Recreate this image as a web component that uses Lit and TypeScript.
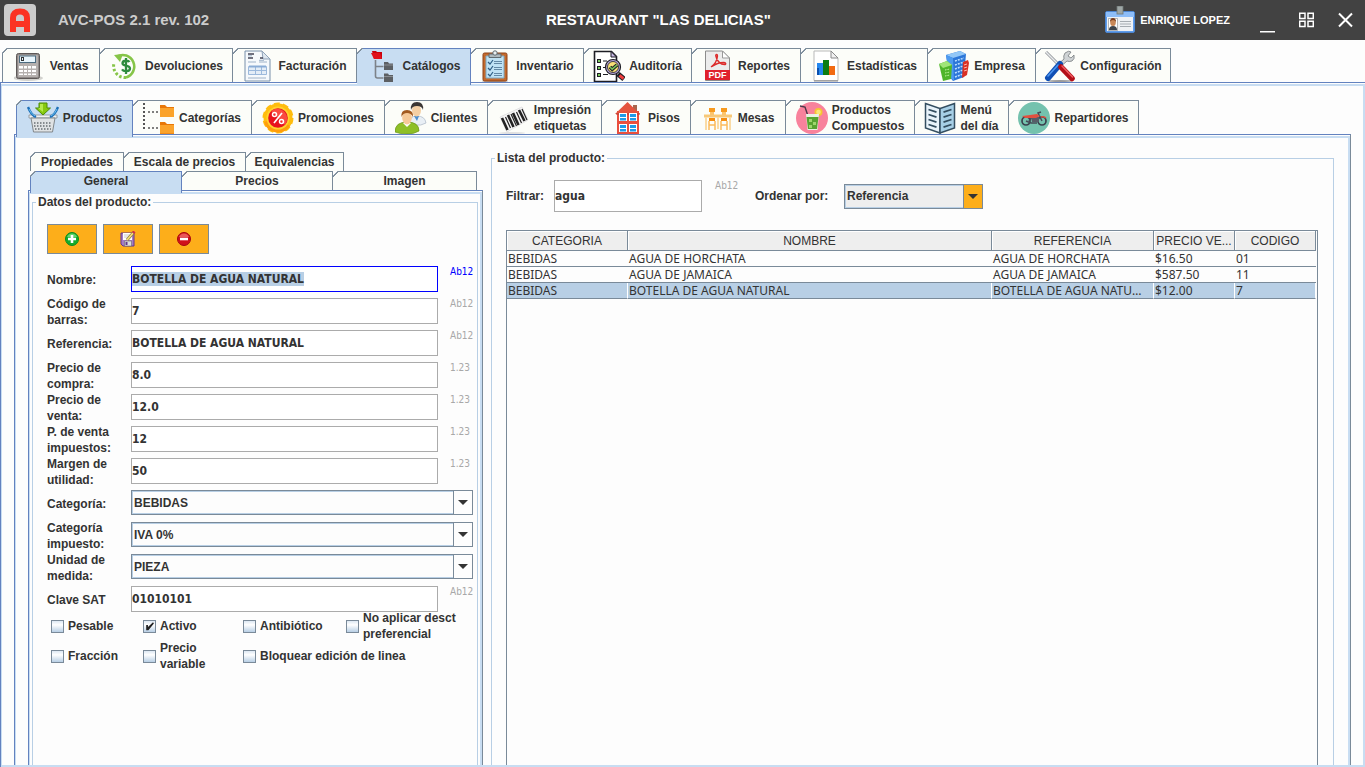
import { LitElement, html, css, TemplateResult } from "lit";
import { customElement, property, state } from "lit/decorators.js";
import { classMap } from "lit/directives/class-map.js";

type Tab = { id: string; label: string[]; };

const icon = (body: TemplateResult) => body;

const ICONS: Record<string, TemplateResult> = {
  ventas: icon(html`<svg viewBox="0 0 32 32" width="32" height="32" aria-hidden="true">
    <ellipse cx="14" cy="28" rx="15" ry="3" fill="#d2d2ce"/><rect x="2.500" y="3.500" width="23" height="25" rx="2" fill="#8f8a88" stroke="#5d5857"/>
    <rect x="4" y="5" width="20" height="22" rx="1" fill="#b5b0ae"/><rect x="5.500" y="6" width="16" height="6.500" fill="#e9f6fd" stroke="#4c6c80"/>
    <rect x="7.500" y="7.500" width="2" height="3" fill="none" stroke="#333"/>
    <g fill="#fff"><path d="M5 16h4v2.500H5zM10 16h3v2.500h-3zM14 16h3v2.500h-3zM18 16h4v2.500h-4zM5 20h4v2H5zM10 20h3v2h-3zM14 20h3v2h-3zM18 20h4v2h-4zM5 23.500h4V25H5zM10 23.500h3V25h-3zM14 23.500h3V25h-3zM18 23.500h4V25h-4z"/></g></svg>`),
  devoluciones: icon(html`<svg viewBox="0 0 32 32" width="32" height="32" aria-hidden="true">
    <path d="M8 6.500A11.500 11.500 0 1 1 17 27.500" fill="none" stroke="#86c548" stroke-width="2.600"/><path d="M5 5l9-1-3 8z" fill="#86c548"/>
    <path d="M17 27.500A11.500 11.500 0 0 1 5 13" fill="none" stroke="#86c548" stroke-width="3" stroke-dasharray="2.500 2"/>
    <path d="M20.500 12c-1-1.700-7-2-7 1.200 0 3.300 7.500 1.700 7.500 5.300 0 3.300-6.500 3.300-8 .8M17 8v16" fill="none" stroke="#2e8b3e" stroke-width="2.300"/></svg>`),
  facturacion: icon(html`<svg viewBox="0 0 32 32" width="32" height="32" aria-hidden="true">
    <path d="M3 1h17l8 8v22H3z" fill="#f6f9fc" stroke="#7890aa"/><path d="M20 1l1 8h7z" fill="#dfe7ef" stroke="#8fa3b8"/>
    <path d="M6 4h6M6 8h5M18 8h3" stroke="#445" stroke-width="1.500"/><path d="M6 5.800h4M6 12h8M17 12h8M17 10.300h5M6 28h18" stroke="#9fb2c8"/>
    <path d="M6.500 16.500h18v8h-18zM6.500 20.500h18M13.500 16.500v8M19.500 16.500v8" fill="#e4edf7" stroke="#9cb9dc"/><path d="M7 16.500h17" stroke="#8aacd6" stroke-width="2"/></svg>`),
  catalogos: icon(html`<svg viewBox="0 0 32 32" width="32" height="32" aria-hidden="true">
    <path d="M9.500 10v16q0 2 2 2h6M9.500 16.500h8" fill="none" stroke="#7d8289" stroke-width="1.600"/>
    <path d="M6 1h4l1 1h5v7H8z" fill="#c9000b"/><path d="M5 3h9l2 6H8z" fill="#e0101b"/>
    <path d="M18 12h4l1 1.500h4V20h-9zM18 23.500h4l1 1.500h4v7h-9z" fill="#5c5f63"/><path d="M18 15h9M18 26.500h9" stroke="#8a8d92"/></svg>`),
  inventario: icon(html`<svg viewBox="0 0 32 32" width="32" height="32" aria-hidden="true">
    <ellipse cx="15" cy="31" rx="13" ry="1" fill="#aaa"/><rect x="3" y="3" width="24" height="28" rx="1.500" fill="#c56a2c" stroke="#8c4319"/>
    <path d="M6 6h18v22H6z" fill="#bfe2f4" stroke="#7fa9c0"/><path d="M9 4h12v3.500H9z" fill="#aeb9be" stroke="#5e6b72"/><circle cx="15" cy="3" r="2.200" fill="#e8eef0" stroke="#5e6b72"/>
    <path d="M8 12l2 2 3-4M8 18l2 2 3-4M8 24l2 2 3-4" fill="none" stroke="#2e5d84" stroke-width="1.200"/><path d="M14 11.500h8M14 13.500h8M14 17.500h8M14 19.500h8M14 23.500h8M14 25.500h8" stroke="#6389a5"/></svg>`),
  auditoria: icon(html`<svg viewBox="0 0 32 32" width="32" height="32" aria-hidden="true">
    <path d="M1.500 1.500h17l5 5v25h-22z" fill="#fff" stroke="#1d1d24" stroke-width="1.600"/><path d="M18 1.500v5.500h5.500z" fill="#c9b9e6" stroke="#1d1d24"/>
    <g fill="#7ecb5f" stroke="#1d1d24"><rect x="4.500" y="9.500" width="3" height="3"/><rect x="4.500" y="16.500" width="3" height="3"/><rect x="4.500" y="23.500" width="3" height="3"/></g>
    <path d="M10 11h4M10 17.500h2M10 24.500h5" stroke="#1d1d24"/><path d="M25 24l6 5" stroke="#1d1d24" stroke-width="5"/><path d="M26.500 25.300l4 3.300" stroke="#ef3c3c" stroke-width="3"/>
    <circle cx="20" cy="17" r="7.500" fill="#b9a6dd" stroke="#1d1d24" stroke-width="1.200"/><circle cx="20" cy="17" r="5.500" fill="#f9df77" stroke="#1d1d24" stroke-width=".8"/>
    <path d="M17 17l2.200 2.200L24 15" fill="none" stroke="#1d1d24" stroke-width="3.600"/><path d="M17 17l2.200 2.200L24 15" fill="none" stroke="#79c65a" stroke-width="1.600"/></svg>`),
  reportes: icon(html`<svg viewBox="0 0 32 32" width="32" height="32" aria-hidden="true">
    <path d="M3.500 1h17l7 7v22.500h-24z" fill="#ececec" stroke="#8c8c8c"/><path d="M20.500 1v7h7z" fill="#fff" stroke="#999"/>
    <path d="M3 20h25v10H3z" fill="#e0202c"/><text x="15.500" y="28" text-anchor="middle" class="pdf">PDF</text>
    <path d="M9 17c3-2 6-6 6.500-11 0-2-2-2-1.700 0 .7 5 5 8.500 8.700 8.500 2 0 1.500-2-1-2-3.500 0-8 1.500-11.500 4" fill="none" stroke="#dc2b2b" stroke-width="1.400"/></svg>`),
  estadisticas: icon(html`<svg viewBox="0 0 32 32" width="32" height="32" aria-hidden="true">
    <path d="M3 1h17l7 7v22.500H3z" fill="#fff" stroke="#b9b9b9"/><path d="M3 31h24" stroke="#8b8b8b"/><path d="M20 1v7h7z" fill="#f1f1f1" stroke="#8a8a8a"/>
    <path d="M6 13h6v12H6z" fill="#2487ef"/><path d="M6 18h2v7H6z" fill="#0b4fae"/><path d="M12 10h6v15h-6z" fill="#0b7d14"/><path d="M18 16h6v9h-6z" fill="#f26a12"/></svg>`),
  empresa: icon(html`<svg viewBox="0 0 32 32" width="32" height="32" aria-hidden="true">
    <path d="M8 5l14-4 6 3-2 23-11 4-4-5z" fill="#2c76d8"/><path d="M8 5l14-4 6 3-13 4z" fill="#92c7f7"/><path d="M8 5l7 3 1 23-4-4z" fill="#4c9af0"/>
    <path d="M17 11l9-3M17 15l9-3M17 19l8-3M17 23l8-3M17 27l8-3" stroke="#b8dcff" stroke-width="1.500" stroke-dasharray="2 1"/>
    <path d="M1 14l8-3 5 4-1 14-8 2z" fill="#4fb52b"/><path d="M1 14l8-3 5 4-9 3z" fill="#a0e578"/><path d="M7 20l5-1M7 23l5-1M7 26l5-1" stroke="#c2f5a4" stroke-dasharray="1.500 1"/>
    <path d="M25 12l5-2 1 3-2 12-5 3z" fill="#d93025"/><path d="M26 15l3-1M26 18l3-1M26 21l3-1" stroke="#ffb4a8"/></svg>`),
  configuracion: icon(html`<svg viewBox="0 0 32 32" width="32" height="32" aria-hidden="true">
    <ellipse cx="16" cy="31" rx="12" ry="1" fill="#9b9b9b"/><path d="M2 2l12 12" stroke="#8d9194" stroke-width="3"/><path d="M2 2l12 12" stroke="#e8ebed" stroke-width="1.500"/>
    <path d="M21 3q4-3 6-1l-3 4 3 2 3-3q1 4-2 6-3 1-5 0l-8 7-2-3 7-6q-1-3 1-6z" fill="#cfd3d5" stroke="#767b7e" stroke-width=".8"/>
    <path d="M16 14l-12 14" stroke="#0f4fb4" stroke-width="6" stroke-linecap="round"/><path d="M14 15L4 26" stroke="#4c95ef" stroke-width="1.600" stroke-linecap="round"/>
    <path d="M17 17l11 11.500" stroke="#b30f18" stroke-width="5.500" stroke-linecap="round"/><path d="M18 16l10.500 11" stroke="#f05a5f" stroke-width="1.500" stroke-linecap="round"/></svg>`),
  productos: icon(html`<svg viewBox="0 0 32 32" width="32" height="32" aria-hidden="true">
    <path d="M2 13h28v3H2z" fill="#f1f3f4" stroke="#888e92" stroke-width=".8"/><path d="M4 16h24l-2.500 14H6.500z" fill="#dfe2e4" stroke="#81878b"/>
    <path d="M7 21h18M7 24h18M8 27h16" stroke="#676d71" stroke-width="1.600" stroke-dasharray="1.500 1.500"/>
    <path d="M1 5q3 8 8 10M31 5q-3 8-8 10" fill="none" stroke="#1d6fb8" stroke-width="2.400"/><path d="M2 7q2 5 6 7M30 7q-2 5-6 7" fill="none" stroke="#6cc0f0"/>
    <path d="M12 1h8v5h3.500L16 13 8.500 6H12z" fill="#86c90f" stroke="#4f8c07"/><path d="M13 2h3v8l-5-4h2z" fill="#b5e94c"/></svg>`),
  categorias: icon(html`<svg viewBox="0 0 32 32" width="32" height="32" aria-hidden="true">
    <path d="M1 1v27" stroke="#555" stroke-width="2" stroke-dasharray="2 2"/><path d="M5 10h11M5 26h11" stroke="#555" stroke-width="1.600" stroke-dasharray="2 2"/>
    <path d="M17 3h5l2 2h7v10H17zM17 20h5l2 2h7v10H17z" fill="#e87708"/><path d="M17 6h14v9H17zM17 23h14v8.500H17z" fill="#fba32b"/></svg>`),
  promociones: icon(html`<svg viewBox="0 0 32 32" width="32" height="32" aria-hidden="true">
    <circle cx="16" cy="16" r="14.500" fill="#ffbd0e" stroke="#ffbd0e" stroke-width="2" stroke-dasharray="6 3.100"/>
    <path d="M2 20a14.500 14.500 0 0 0 26 4L16 16z" fill="#ff9d0b"/><circle cx="16" cy="16" r="11.500" fill="#ffd22f"/><circle cx="16" cy="16" r="9.800" fill="#e8131e"/><path d="M9.100 9.100A9.800 9.800 0 0 1 22.900 22.900z" fill="#fb4a41"/>
    <path d="M20 11l-8 10" stroke="#fff" stroke-width="1.700"/><circle cx="12.500" cy="12.500" r="2" fill="none" stroke="#fff" stroke-width="1.500"/><circle cx="19.500" cy="19.500" r="2" fill="none" stroke="#fff" stroke-width="1.500"/></svg>`),
  clientes: icon(html`<svg viewBox="0 0 32 32" width="32" height="32" aria-hidden="true">
    <path d="M14 22q0-8 8-8t9 7q-5 3-11 2z" fill="#e9eff5" stroke="#aab6c4" stroke-width=".7"/><path d="M19 14l3 5 2-5z" fill="#4d8fd0"/><ellipse cx="21.500" cy="8.500" rx="4.500" ry="6" fill="#f4cfa4"/><path d="M16 8q-1-8 6-8t6 8q-1-4-6-4t-6 4z" fill="#3b3634"/>
    <path d="M0 30q0-10 12-10t12 9q-5 3-12 3T0 30z" fill="#8ebf27" stroke="#69951a" stroke-width=".7"/><path d="M8 21l4 4 4-4z" fill="#fff"/><ellipse cx="12" cy="16" rx="4.800" ry="6.500" fill="#f6c998"/><path d="M6.500 15q-1-7 5.500-7t6 7q-2-4-6-4t-5.500 4z" fill="#a25a20"/></svg>`),
  etiquetas: icon(html`<svg viewBox="0 0 32 32" width="32" height="32" aria-hidden="true">
    <ellipse cx="14" cy="31" rx="13" ry="1" fill="#e0e0e0"/><path d="M2 15L24 5l6 13L9 30z" fill="#f5f5f5" stroke="#e2e2e2"/>
    <path d="M4 16l5.500 12M10 13l5.500 12M15 11l5.500 12M21 8l5.500 11" stroke="#222" stroke-width="2.600"/><path d="M7.500 15l5 11M13 12l5.500 12M18.500 10l5 11M24 7l5 11" stroke="#222" stroke-width="1.200"/></svg>`),
  pisos: icon(html`<svg viewBox="0 0 32 32" width="32" height="32" aria-hidden="true">
    <path d="M21 3h4v6h-4z" fill="#a9664d"/><path d="M5 9h22v23H5z" fill="#e94f3d"/><path d="M3 12L15.500 0 28 12z" fill="#e4543e"/><path d="M4 12h24" stroke="#b53b2e"/>
    <g fill="#fff"><path d="M7 11h8v8H7zM17 11h8v8h-8zM7 22h8v8H7zM17 22h8v8h-8z"/></g><g fill="#1e9be8"><path d="M8 12h6v3H8zM8 16h6v2.500H8zM18 12h6v3h-6zM18 16h6v2.500h-6zM8 23h6v3H8zM8 27h6v2.500H8zM18 23h6v3h-6zM18 27h6v2.500h-6z"/></g></svg>`),
  mesas: icon(html`<svg viewBox="0 0 32 32" width="32" height="32" aria-hidden="true">
    <path d="M2 14h28" stroke="#f7c879" stroke-width="3"/><path d="M4 15v13M28 15v13M16 15v12" stroke="#fadba5" stroke-width="2"/>
    <path d="M7 6h6v4H7zM19 6h6v4h-6z" fill="#f79a1f"/><path d="M8 10h4v3H8zM20 10h4v3h-4z" fill="#fcc56d"/>
    <path d="M7 16h6v3H7zM19 16h6v3h-6z" fill="#f58d10"/><path d="M7 19v9M13 19v9M19 19v9M25 19v9M7 23h6M19 23h6" stroke="#fbbb5c" stroke-width="1.500"/></svg>`),
  compuestos: icon(html`<svg viewBox="0 0 32 32" width="32" height="32" aria-hidden="true">
    <circle cx="16" cy="16" r="16" fill="#f8829c"/><path d="M4 4l5 1 3 9" fill="none" stroke="#4d3648" stroke-width="1.400"/><circle cx="22.500" cy="10" r="4" fill="#f5c632"/><circle cx="22.500" cy="10" r="2.300" fill="#fae57c"/>
    <path d="M10 12h13l-1.500 16h-10z" fill="#e9f2e4"/><path d="M10.500 15h12L21 27H12z" fill="#58a331"/><path d="M13 17h3v3h-3zM17 20h3v3h-3zM13 23h3v3h-3z" fill="#9fd66d"/></svg>`),
  menu: icon(html`<svg viewBox="0 0 32 32" width="32" height="32" aria-hidden="true">
    <path d="M1.500 1.500L16 6.500V31L1.500 26z" fill="#e8f3fa" stroke="#344e60" stroke-width="1.500"/><path d="M30.500 1.500L16 6.500V31l14.500-5z" fill="#a6cfe6" stroke="#344e60" stroke-width="1.500"/>
    <path d="M4.500 7.500l8 2.600M4.500 12.500l8 2.600M4.500 17.500l8 2.600M4.500 22.500l8 2.600M27.500 7.500l-8 2.600M27.500 12.500l-8 2.600M27.500 17.500l-8 2.600M27.500 22.500l-8 2.600" stroke="#344e60" stroke-width="1.700"/></svg>`),
  repartidores: icon(html`<svg viewBox="0 0 32 32" width="32" height="32" aria-hidden="true">
    <circle cx="16" cy="16" r="16" fill="#74c2ae"/><circle cx="8" cy="19" r="4" fill="none" stroke="#3a3f4d" stroke-width="1.700"/><circle cx="24" cy="19" r="4" fill="none" stroke="#3a3f4d" stroke-width="1.700"/>
    <path d="M8 19l5 2h6M24 19l-4-8 3-1M11 19l3-4" fill="none" stroke="#454b58" stroke-width="1.500"/><path d="M13 15h8v5h-7z" fill="#565c68"/><path d="M4 14l8-1 7-1 3 2-4 2H7z" fill="#e1503f"/><path d="M23 15q3-1 5 1" fill="none" stroke="#e1503f" stroke-width="1.500"/></svg>`),
};

const MAIN_TABS: Tab[] = [
  { id: "ventas", label: ["Ventas"] },
  { id: "devoluciones", label: ["Devoluciones"] },
  { id: "facturacion", label: ["Facturación"] },
  { id: "catalogos", label: ["Catálogos"] },
  { id: "inventario", label: ["Inventario"] },
  { id: "auditoria", label: ["Auditoría"] },
  { id: "reportes", label: ["Reportes"] },
  { id: "estadisticas", label: ["Estadísticas"] },
  { id: "empresa", label: ["Empresa"] },
  { id: "configuracion", label: ["Configuración"] },
];

const CATALOG_TABS: Tab[] = [
  { id: "productos", label: ["Productos"] },
  { id: "categorias", label: ["Categorías"] },
  { id: "promociones", label: ["Promociones"] },
  { id: "clientes", label: ["Clientes"] },
  { id: "etiquetas", label: ["Impresión", "etiquetas"] },
  { id: "pisos", label: ["Pisos"] },
  { id: "mesas", label: ["Mesas"] },
  { id: "compuestos", label: ["Productos", "Compuestos"] },
  { id: "menu", label: ["Menú", "del día"] },
  { id: "repartidores", label: ["Repartidores"] },
];

const DETAIL_BACK: Tab[] = [
  { id: "propiedades", label: ["Propiedades"] },
  { id: "escala", label: ["Escala de precios"] },
  { id: "equivalencias", label: ["Equivalencias"] },
];

const DETAIL_FRONT: Tab[] = [
  { id: "general", label: ["General"] },
  { id: "precios", label: ["Precios"] },
  { id: "imagen", label: ["Imagen"] },
];

const FIELDS = [
  { id: "nombre", label: "Nombre:", value: "BOTELLA DE AGUA NATURAL", hint: "Ab12" },
  { id: "codigo", label: "Código de barras:", value: "7", hint: "Ab12" },
  { id: "referencia", label: "Referencia:", value: "BOTELLA DE AGUA NATURAL", hint: "Ab12" },
  { id: "compra", label: "Precio de compra:", value: "8.0", hint: "1.23" },
  { id: "venta", label: "Precio de venta:", value: "12.0", hint: "1.23" },
  { id: "impuestos", label: "P. de venta impuestos:", value: "12", hint: "1.23" },
  { id: "margen", label: "Margen de utilidad:", value: "50", hint: "1.23" },
];

const SELECTS = [
  { id: "categoria", label: "Categoría:", value: "BEBIDAS" },
  { id: "impuesto", label: "Categoría impuesto:", value: "IVA 0%" },
  { id: "unidad", label: "Unidad de medida:", value: "PIEZA" },
];

const CHECKS = [
  { id: "pesable", label: ["Pesable"], on: false },
  { id: "activo", label: ["Activo"], on: true },
  { id: "antibiotico", label: ["Antibiótico"], on: false },
  { id: "desct", label: ["No aplicar desct", "preferencial"], on: false },
  { id: "fraccion", label: ["Fracción"], on: false },
  { id: "variable", label: ["Precio", "variable"], on: false },
  { id: "bloquear", label: ["Bloquear edición de linea"], on: false },
];

const ROWS = [
  ["BEBIDAS", "AGUA DE HORCHATA", "AGUA DE HORCHATA", "$16.50", "01"],
  ["BEBIDAS", "AGUA DE JAMAICA", "AGUA DE JAMAICA", "$587.50", "11"],
  ["BEBIDAS", "BOTELLA DE AGUA NATURAL", "BOTELLA DE AGUA NATURAL", "$12.00", "7"],
];

const lines = (parts: string[]) => parts.map((p) => html`<span class="line">${p}</span>`);

@customElement("pos-tabs")
class PosTabs extends LitElement {
  @property({ attribute: false }) tabs: Tab[] = [];
  @property() active = "";
  @property() kind = "main";

  static styles = css`
    :host { display: block; position: relative; z-index: 1; }
    .strip { display: grid; justify-content: start; grid-template-rows: 34px; }
    .main { grid-template-columns: 98px 133px 124px 114px 113px 108px 109px 127px 108px 135px; }
    .catalog { grid-template-columns: 117px 119px 133px 103px 114px 89px 95px 129px 94px 130px; }
    .back, .front { grid-template-rows: 19px; }
    .back { grid-template-columns: 94px 122px 98px; }
    .front { grid-template-columns: 152px 151px 144px; }
    button {
      position: relative; display: flex; align-items: center; justify-content: center; gap: 4px;
      min-width: 0; margin: 0; padding: 0; border: 0 solid #7a8a99; border-top-width: 1px; border-right-width: 1px;
      background: #fcfdf9; color: #333; font: bold 12px/16px "Liberation Sans", Arial, sans-serif; white-space: nowrap; text-align: left;
    }
    button:first-child { border-left-width: 1px; }
    button::before {
      content: ""; position: absolute; left: 0; top: -1px; width: 6px; height: 6px;
      background: linear-gradient(to bottom right, #fdfdfd 40%, #7a8a99 42%, #7a8a99 52%, transparent 54%);
    }
    button:first-child::before { left: -1px; }
    button.on { background: #c8ddf2; border-color: #6382bf; height: calc(100% + 3px); padding-bottom: 3px; box-sizing: border-box; }
    svg { flex: none; display: block; }
    .line { display: block; }
    .pdf { font: bold 9px "Liberation Sans", Arial, sans-serif; fill: #fff; }
  `;

  render() {
    return html`<div class="strip ${this.kind}" role="tablist">
      ${this.tabs.map((t) => html`<button role="tab" class=${classMap({ on: t.id === this.active })}
        aria-selected=${t.id === this.active ? "true" : "false"}>${ICONS[t.id] ?? ""}<span>${lines(t.label)}</span></button>`)}
    </div>`;
  }
}

@customElement("pos-combo")
class PosCombo extends LitElement {
  @property() label = "";
  @property() value = "";
  @property({ type: Boolean, reflect: true }) accent = false;

  static styles = css`
    :host { display: block; position: relative; height: 25px; }
    select {
      appearance: none; width: 100%; height: 100%; box-sizing: border-box; margin: 0; padding: 0 22px 0 2px;
      border: 1px solid #7a8a99; border-radius: 0; background: #fdfdfd; color: #333;
      box-shadow: inset 0 0 0 1px #b8cfe5; font: bold 12px/16px "Liberation Sans", Arial, sans-serif; outline: 0;
    }
    .arrow {
      position: absolute; right: 1px; top: 1px; bottom: 1px; width: 18px; border-left: 1px solid #7a8a99;
      background: #fdfdfd; display: flex; align-items: center; justify-content: center; pointer-events: none;
    }
    :host([accent]) select { background: #eee; }
    :host([accent]) .arrow { background: #fdae1a; }
  `;

  render() {
    return html`<select aria-label=${this.label}><option>${this.value}</option></select>
      <span class="arrow"><svg width="10" height="5" viewBox="0 0 10 5" aria-hidden="true"><path d="M0 0h10L5 5z" fill="#333"/></svg></span>`;
  }
}

@customElement("product-form")
class ProductForm extends LitElement {
  static styles = css`
    :host { display: flex; flex-direction: column; }
    .offset { display: block; margin-left: 2px; }
    .panel { flex: 1; display: flex; border: 1px solid #6382bf; border-right-color: #7a8a99; border-bottom: 0; padding-top: 1px; }
    .inner { flex: 1; border: solid #c8ddf2; border-width: 2px 2px 0 1px; padding: 0 2px; display: flex; }
    fieldset { flex: 1; min-width: 0; margin: 0; border: 1px solid #b8cfe5; border-bottom: 0; padding: 14px 4px 0 14px; }
    legend { margin-left: -11px; padding: 0 2px; line-height: 16px; }
    .tools { display: flex; gap: 6px; margin-bottom: 12px; }
    .tools button { width: 50px; height: 30px; padding: 0; border: 1px solid #7a8a99; background: #fdae1a; display: flex; align-items: center; justify-content: center; }
    .rows { display: grid; gap: 6px; }
    .row { display: grid; grid-template: 26px / 84px 1fr 35px; align-items: center; }
    .row label { padding: 2px 8px 0 0; }
    .row pos-combo { grid-column: 2 / 4; align-self: start; }
    input.text {
      width: 100%; height: 26px; box-sizing: border-box; border: 1px solid #ababab; border-radius: 0; margin: 0; padding: 0;
      background: #fff; color: #333; font: bold 12px "DejaVu Sans Condensed", "DejaVu Sans", sans-serif; outline: 0; caret-color: transparent;
    }
    input.text::selection { background: #b8cfe5; color: #333; }
    .hint { align-self: start; padding-left: 12px; font: 10px/12px "DejaVu Sans Condensed", "DejaVu Sans", sans-serif; color: #a8a8a8; }
    .current input.text { border-color: #00f; }
    .current .hint { color: #00f; }
    .checks { display: grid; grid-template-columns: 92px 100px 103px 1fr; grid-template-rows: 28px 32px; margin: 0 0 0 4px; }
    .check { display: flex; align-items: center; gap: 4px; white-space: nowrap; }
    .wide { grid-column: 3 / 5; }
    .line { display: block; }
    .check input {
      appearance: none; flex: none; width: 13px; height: 13px; margin: 0; border: 1px solid #7a8a99;
      background: linear-gradient(#dde8f3, #fff 35%, #b8cfe5);
    }
    .check input:checked::before {
      content: ""; display: block; width: 11px; height: 11px; background: #222;
      clip-path: polygon(20% 40%, 36% 40%, 36% 60%, 82% 15%, 90% 28%, 40% 88%, 20% 88%);
    }
  `;

  firstUpdated() {
    const first = this.renderRoot.querySelector<HTMLInputElement>("#nombre");
    first?.focus();
    first?.select();
  }

  private field(f: { id: string; label: string; value: string; hint: string }) {
    return html`<div class=${classMap({ row: true, current: f.id === "nombre" })}>
      <label for=${f.id}>${f.label}</label>
      <input class="text" id=${f.id} .value=${f.value}><span class="hint">${f.hint}</span>
    </div>`;
  }

  render() {
    return html`
      <pos-tabs class="offset" kind="back" .tabs=${DETAIL_BACK}></pos-tabs>
      <pos-tabs class="offset" kind="front" active="general" .tabs=${DETAIL_FRONT}></pos-tabs>
      <div class="panel"><div class="inner"><fieldset>
        <legend>Datos del producto:</legend>
        <div class="tools">
          <button aria-label="Agregar"><svg width="16" height="16" viewBox="0 0 16 16"><circle cx="8" cy="8" r="6.500" fill="#14ad2b" stroke="#0c8a1f"/><path d="M3 6a5.300 5.300 0 0 1 10 0z" fill="#62d36f"/><path d="M8 4v8M4 8h8" stroke="#fff" stroke-width="2.600"/></svg></button>
          <button aria-label="Guardar"><svg width="16" height="16" viewBox="0 0 16 16"><path d="M1 2h13v13H3l-2-2z" fill="#a57cc4" stroke="#62378a"/><path d="M3 2h9v7H3z" fill="#fff"/><path d="M4 4h6M4 6h5" stroke="#ccc"/><path d="M4.500 10h7v5h-7z" fill="#ddd" stroke="#6b6b6b" stroke-width=".6"/><path d="M5.500 11h2v3h-2z" fill="#62378a"/><path d="M7 9l6.500-7.500" stroke="#93823c" stroke-width="3"/><path d="M7 9l6-7" stroke="#f7e27c" stroke-width="1.600"/><path d="M13 2l1.500-1.500" stroke="#d03048" stroke-width="3"/></svg></button>
          <button aria-label="Eliminar"><svg width="16" height="16" viewBox="0 0 16 16"><circle cx="8" cy="8" r="6.500" fill="#d0111b" stroke="#a60710"/><path d="M3 6a5.300 5.300 0 0 1 10 0z" fill="#e9585a"/><path d="M4 8h8" stroke="#fff" stroke-width="2.600"/></svg></button>
        </div>
        <div class="rows">
          ${FIELDS.map((f) => this.field(f))}
          ${SELECTS.map((s) => html`<div class="row"><label>${s.label}</label><pos-combo label=${s.label} value=${s.value}></pos-combo></div>`)}
          ${this.field({ id: "sat", label: "Clave SAT", value: "01010101", hint: "Ab12" })}
        </div>
        <div class="checks">
          ${CHECKS.map((c) => html`<label class=${classMap({ check: true, wide: c.id === "bloquear" })}>
            <input type="checkbox" .checked=${c.on}><span>${lines(c.label)}</span></label>`)}
        </div>
      </fieldset></div></div>`;
  }
}

@customElement("product-list")
class ProductList extends LitElement {
  @state() selected = 2;

  static styles = css`
    :host { display: flex; }
    fieldset { flex: 1; min-width: 0; margin: 0; border: 1px solid #b8cfe5; border-bottom: 0; padding: 14px 15px 0 14px; display: flex; flex-direction: column; }
    legend { margin-left: -11px; padding: 0 2px; line-height: 16px; }
    .content { display: flex; flex-direction: column; flex: 1; }
    .filter { display: flex; align-items: center; height: 32px; margin-bottom: 18px; }
    .filter > label { width: 48px; }
    .filter input { width: 148px; height: 32px; box-sizing: border-box; border: 1px solid #ababab; margin: 0; padding: 0; background: #fff; color: #333; font: bold 12px "DejaVu Sans Condensed", "DejaVu Sans", sans-serif; outline: 0; }
    .hint { align-self: start; width: 40px; margin-left: 13px; font: 10px/12px "DejaVu Sans Condensed", "DejaVu Sans", sans-serif; color: #a8a8a8; }
    .order { width: 89px; }
    .filter pos-combo { width: 139px; }
    .scroll { flex: 1; border: 1px solid #7a8a99; border-bottom: 0; padding-right: 1px; }
    table { width: 100%; table-layout: fixed; border-collapse: separate; border-spacing: 0; color: #333; font: 12px/15px "Noto Sans", sans-serif; }
    .c1 { width: 121px; } .c3 { width: 162px; } .c4, .c5 { width: 81px; }
    th, td { overflow: hidden; white-space: nowrap; text-overflow: ellipsis; box-sizing: border-box; }
    th { height: 20px; padding: 1px 1px 0; background: #eee; border-right: 1px solid #7a8a99; border-bottom: 1px solid #7a8a99; box-shadow: inset 1px 1px #fff; font: 12px/18px "Liberation Sans", Arial, sans-serif; }
    td { height: 16px; padding: 0 4px 0 1px; border-bottom: 1px solid #7a8a99; }
    .on td { background: #b8cfe5; border-right: 1px solid #fff; }
  `;

  render() {
    return html`<fieldset>
      <legend>Lista del producto:</legend>
      <div class="content">
      <div class="filter">
        <label for="filtrar">Filtrar:</label>
        <input id="filtrar" value="agua"><span class="hint">Ab12</span>
        <span class="order">Ordenar por:</span>
        <pos-combo accent label="Ordenar por" value="Referencia"></pos-combo>
      </div>
      <div class="scroll"><table>
        <colgroup><col class="c1"><col><col class="c3"><col class="c4"><col class="c5"></colgroup>
        <thead><tr><th>CATEGORIA</th><th>NOMBRE</th><th>REFERENCIA</th><th>PRECIO VE...</th><th>CODIGO</th></tr></thead>
        <tbody>${ROWS.map((r, i) => html`<tr class=${classMap({ on: i === this.selected })} @click=${() => (this.selected = i)}>${r.map((c) => html`<td>${c}</td>`)}</tr>`)}</tbody>
      </table></div>
      </div>
    </fieldset>`;
  }
}

@customElement("app-root")
class AppRoot extends LitElement {
  static styles = css`
    :host { display: flex; flex-direction: column; min-height: 100vh; box-sizing: border-box; background: #fdfdfd; color: #333; font: bold 12px/16px "Liberation Sans", Arial, sans-serif; }
    header { display: grid; grid-template-columns: 40% 1fr auto; align-items: center; height: 40px; background: #424242; color: #fff; }
    .brand { display: flex; align-items: center; gap: 22px; padding-left: 4px; color: #ccc; font-size: 15px; }
    h1 { margin: 0; font-size: 15px; line-height: 16px; }
    .right { display: flex; align-items: center; gap: 24px; padding-right: 12px; }
    .user { display: flex; align-items: center; gap: 5px; margin-right: 6px; font-size: 11px; }
    .right button { border: 0; padding: 0; background: none; display: block; height: 16px; }
    svg { display: block; }
    .main-tabs { margin: 8px 0 0 2px; }
    .outer { flex: 1; display: flex; border: solid #6382bf; border-width: 1px 0 0 1px; padding-top: 1px; }
    .outer-in { flex: 1; display: flex; flex-direction: column; min-width: 0; border: 2px solid #c8ddf2; border-left-width: 1px; padding: 14px 12px 0; }
    .cat-tabs { margin-left: 2px; }
    .inner { flex: 1; display: flex; border: 1px solid #6382bf; border-right-color: #7a8a99; border-bottom: 0; padding-top: 1px; }
    .work { flex: 1; min-width: 0; display: grid; grid-template-columns: 455px 1fr; gap: 8px; border: solid #c8ddf2; border-width: 2px 2px 0 1px; padding: 12px 14px 0 12px; }
    product-form { margin-top: 2px; }
  `;

  render() {
    return html`
      <header>
        <div class="brand">
          <svg width="32" height="32" viewBox="0 0 32 32" aria-hidden="true"><rect width="32" height="32" rx="4" fill="#ccc"/><path d="M9 28V14q0-6.500 7-6.500t7 6.500v14M9 20h14" fill="none" stroke="#fb3323" stroke-width="6"/></svg>
          <span>AVC-POS 2.1 rev. 102</span>
        </div>
        <h1>RESTAURANT "LAS DELICIAS"</h1>
        <div class="right">
          <div class="user">
            <svg width="30" height="28" viewBox="0 0 30 28" aria-hidden="true"><rect x=".5" y="5.500" width="29" height="21" rx="1.500" fill="#5f9cea" stroke="#4d86d0"/><path d="M1 6h28v5H1z" fill="#8dbdf8"/><path d="M2 11h26v14H2z" fill="#eef1f4"/><rect x="12" y="0" width="6" height="8" fill="#9fa7a6" stroke="#6d7574" stroke-width=".8"/><path d="M3.500 12.500h9v12h-9z" fill="#fff" stroke="#888" stroke-width=".6"/><ellipse cx="8" cy="16.500" rx="2.800" ry="3.600" fill="#c98858"/><path d="M5 16q0-4 3-4t3 4q-1-2-3-2t-3 2z" fill="#7a3d1c"/><path d="M4 24q0-4 4-4t4 4z" fill="#3d444c"/><path d="M15 15.500h11M15 18h11M15 20.500h11" stroke="#a6acb2"/></svg>
            <span>ENRIQUE LOPEZ</span>
          </div>
          <button aria-label="Minimizar"><svg width="15" height="22" viewBox="0 0 15 22"><path d="M0 19h15v1.500H0z" fill="#fff"/></svg></button>
          <button aria-label="Maximizar"><svg width="15" height="16" viewBox="0 0 15 16"><path d="M.7 1.200h5.300v5.300H.7zM9 1.200h5.300v5.300H9zM.7 9.200h5.300v5.300H.7zM9 9.200h5.300v5.300H9z" fill="none" stroke="#fff" stroke-width="1.500"/></svg></button>
          <button aria-label="Cerrar"><svg width="15" height="16" viewBox="0 0 15 16"><path d="M1 1.500l13 13M14 1.500l-13 13" stroke="#fff" stroke-width="2"/></svg></button>
        </div>
      </header>
      <pos-tabs class="main-tabs" kind="main" active="catalogos" .tabs=${MAIN_TABS}></pos-tabs>
      <div class="outer"><div class="outer-in">
        <pos-tabs class="cat-tabs" kind="catalog" active="productos" .tabs=${CATALOG_TABS}></pos-tabs>
        <div class="inner"><main class="work">
          <product-form></product-form>
          <product-list></product-list>
        </main></div>
      </div></div>`;
  }
}
